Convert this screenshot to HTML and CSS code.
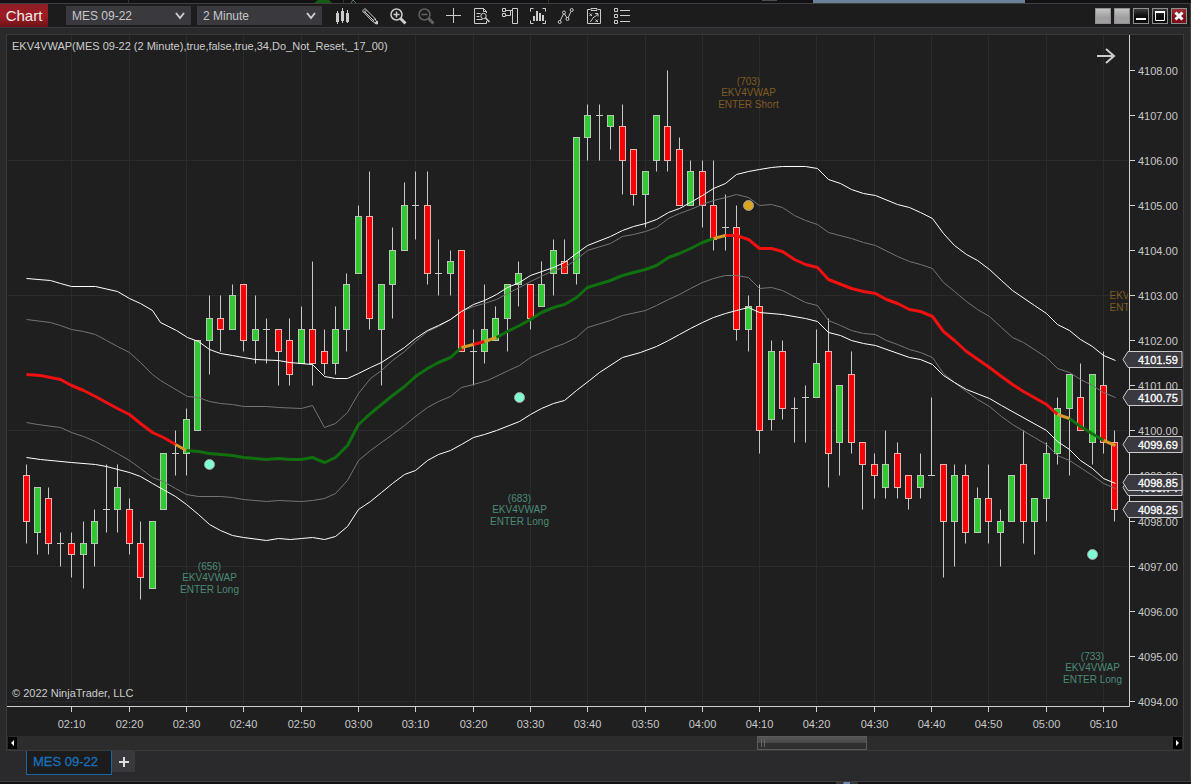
FILE: index.html
```html
<!DOCTYPE html>
<html lang="en">
<head>
    <meta charset="utf-8" />
    <title>Chart - MES 09-22</title>
    <link rel="stylesheet" href="styles.css">
</head>
<body>
    <svg class="strip strip-top" viewBox="0 0 1191 3" preserveAspectRatio="none" aria-hidden="true">
        <path d="M813 0H1025V3H813Z" fill="#6b7f98" />
        <path d="M318 0H329L332 3H314Z" fill="#155a15" />
        <path d="M351 3L353 0L356 3" fill="none" stroke="#567a68" />
        <path d="M128.5 0V3M343.5 0V3M548.5 0V3" stroke="#333" />
        <path d="M762 0H777" stroke="#888" />
    </svg>

    <div class="window">
        <header class="toolbar">
            <h1 class="title">Chart</h1>
            <select class="picker" aria-label="Instrument">
                <option>MES 09-22</option>
            </select>
            <select class="picker" aria-label="Interval">
                <option>2 Minute</option>
            </select>
            <div class="tools">
                <button class="tool" aria-label="Chart style">
                    <svg viewBox="0 0 20 20"><path d="M4 7h3v9H4zM9 5h3v10H9zM14 7h3v9h-3z" fill="#ccc" stroke="none" /><path d="M5.5 5v13M10.5 2v15M15.5 4v13" /></svg>
                </button>
                <button class="tool" aria-label="Drawing tools">
                    <svg viewBox="0 0 20 20"><path d="M2.500 5L5 2.500L15 12.500L17.500 17.500L12.500 15.500zM4 6.500L6.500 4M4.500 5.500L13.500 14.500M12.500 15.500L15 12.500" /><path d="M15 17.500L17.500 15V18z" fill="#ccc" /></svg>
                </button>
                <button class="tool" aria-label="Zoom in">
                    <svg viewBox="0 0 20 20"><circle cx="8.500" cy="8.500" r="5.500" stroke-width="1.500" /><path d="M5.500 8.500h6M8.500 5.500v6" stroke-width="1.500" /><path d="M12.500 12.500L17.500 17.500" stroke-width="3" /></svg>
                </button>
                <button class="tool" aria-label="Zoom out" disabled>
                    <svg viewBox="0 0 20 20"><circle cx="8.500" cy="8.500" r="5.500" stroke-width="1.500" /><path d="M5.500 8.500h6" stroke-width="1.500" /><path d="M12.500 12.500L17.500 17.500" stroke-width="3" /></svg>
                </button>
                <button class="tool" aria-label="Cross hair">
                    <svg viewBox="0 0 20 20"><path d="M2 9.500h15M9.500 2v15" /></svg>
                </button>
                <button class="tool" aria-label="Data box">
                    <svg viewBox="0 0 20 20"><path d="M14.500 7V5.500L11.500 2.500H2.500V17.500H14.500V15M11.500 2.500V5.500H14.500M4.500 7.500h4M4.500 10.500h3M4.500 13.500h6" /><circle cx="11.500" cy="10" r="2.700" /><path d="M13.500 12L17.500 16" stroke-width="1.700" /></svg>
                </button>
                <button class="tool" aria-label="Chart trader">
                    <svg viewBox="0 0 20 20"><path d="M2.500 2.500h3v3h-3zM2.500 7.500h3v3h-3zM5.500 4.500H12M5.500 9.500H10.500V4.500M12.500 2.500h5v15h-5z" /></svg>
                </button>
                <button class="tool" aria-label="Indicators">
                    <svg viewBox="0 0 20 20"><path d="M2.500 5.500v-3h3M14.500 2.500h3v3M17.500 14.500v3h-3M5.500 17.500h-3v-3" /><path d="M6 15v-5M9 15V5M12 15V7M15 15V9" stroke-width="2" /></svg>
                </button>
                <button class="tool" aria-label="Strategies">
                    <svg viewBox="0 0 20 20"><path d="M4 15L7.500 8M8.500 8L11 12M12 12L15 5.500" /><circle cx="3.700" cy="16" r="1.500" /><circle cx="8" cy="6.500" r="1.500" /><circle cx="11.500" cy="13" r="1.500" /><circle cx="15.700" cy="4" r="1.500" /></svg>
                </button>
                <button class="tool" aria-label="Strategy performance">
                    <svg viewBox="0 0 20 20"><path d="M6 3.500H3.500v14h13v-14H14M7 2.500h6v2H7zM5.500 7.500l2.500 2.500M8 7.500L5.500 10M11.500 13.500L14 16M14 13.500L11.500 16M6 15.500c2 0 2-3.500 4-4.500s2.500-1 3.500-3M11 7.500h3v3" /></svg>
                </button>
                <button class="tool" aria-label="Properties">
                    <svg viewBox="0 0 20 20"><path d="M2.500 2.500h3v3h-3zM2.500 8.500h3v3h-3zM2.500 14.500h3v3h-3zM8 4.500h10M8 9.500h10M8 15.500h10" /></svg>
                </button>
            </div>
            <div class="window-buttons">
                <button class="link-button" aria-label="Instrument link"></button>
                <button class="link-button" aria-label="Interval link"></button>
                <button class="frame-button" aria-label="Minimize"><svg viewBox="0 0 14 14"><path d="M2 10h10" stroke-width="2" /></svg></button>
                <button class="frame-button" aria-label="Maximize"><svg viewBox="0 0 14 14"><path d="M2.500 3v8.500h9V3" /><path d="M2 3h10" stroke-width="2" /></svg></button>
                <button class="frame-button close" aria-label="Close"><svg viewBox="0 0 14 14"><path d="M3.500 3.500L10.500 10.500M10.500 3.500L3.500 10.500" stroke-width="3" /></svg></button>
            </div>
        </header>

        <main class="panel">
            <svg id="chart" class="chart" viewBox="7 35 1176 701" role="img" aria-label="MES 09-22 2 minute chart">
                <clipPath id="plot"><path d="M7 35H1128V706H7Z" /></clipPath>
                <g id="grid" class="grid"></g>
                <g id="notes" clip-path="url(#plot)"></g>
                <g id="candles"></g>
                <g id="lines" class="lines"></g>
                <g class="dots">
                    <circle class="long" cx="209.500" cy="464.500" r="5" />
                    <circle class="long" cx="519.500" cy="397.500" r="5" />
                    <circle class="short" cx="748.500" cy="205.500" r="5" />
                    <circle class="long" cx="1092.500" cy="554.500" r="5" />
                </g>
                <path class="axis" d="M1129.500 35V706.500H7" />
                <g id="axis" class="axis"></g>
                <g id="tags"></g>
                <text class="caption" x="12" y="50">EKV4VWAP(MES 09-22 (2 Minute),true,false,true,34,Do_Not_Reset,_17_00)</text>
                <text class="caption" x="12" y="697">© 2022 NinjaTrader, LLC</text>
                <path class="arrow" d="M1097 56H1114M1106 49L1114 56L1106 63" />
            </svg>
            <div class="scrollbar">
                <button class="scroll-arrow" aria-label="Scroll left"><svg viewBox="0 0 9 12"><path d="M6 3V9L3 6Z" /></svg></button>
                <div class="track"><div class="thumb"></div></div>
                <button class="scroll-arrow" aria-label="Scroll right"><svg viewBox="0 0 9 12"><path d="M3 3V9L6 6Z" /></svg></button>
            </div>
        </main>

        <nav class="tabs">
            <a class="tab" href="#mes">MES 09-22</a>
            <button class="add-tab" aria-label="Add tab"><svg viewBox="0 0 10 10"><path d="M0 5H10M5 0V10" /></svg></button>
        </nav>
    </div>
    <svg class="strip strip-bottom" viewBox="0 0 1191 2" preserveAspectRatio="none" aria-hidden="true">
        <path d="M836 0H858V2H836Z" fill="#33333a" />
        <path d="M844 0H850V2H843Z" fill="#7088b0" />
    </svg>
    <script src="chart.js"></script>
</body>
</html>
```
FILE: styles.css
```css
body {
    margin: 0;
    min-height: 100vh;
    display: flex;
    flex-direction: column;
    background: #131114;
    color: #c8c8c8;
    font: 12px/16px "Liberation Sans", Arial, sans-serif;
}

button {
    margin: 0;
    padding: 0;
    border: 0;
    background: none;
}

svg {
    display: block;
}

.strip {
    width: 100%;
    flex: none;
}

.strip-top {
    height: 3px;
}

.strip-bottom {
    height: 2px;
}

.window {
    flex: 1;
    background: #2a2a2c;
    border: 1px solid #3e3e40;
    border-left: 0;
}

.toolbar {
    display: flex;
    align-items: center;
    gap: 6px;
    height: 23px;
    background: #1c1c1c;
    border-bottom: 1px solid #3a3a3c;
}

.title {
    margin: 0 12px 0 0;
    width: 48px;
    background: linear-gradient(to bottom, #8c1d24, #a01c24 50%, #6f1319);
    color: #eee;
    font-size: 15px;
    font-weight: normal;
    line-height: 23px;
    text-align: center;
}

.picker {
    appearance: none;
    width: 125px;
    height: 19px;
    padding: 0 6px;
    border: 0;
    border-radius: 0;
    background: #39393e url("data:image/svg+xml,%3Csvg xmlns='http://www.w3.org/2000/svg' width='10' height='8'%3E%3Cpath d='M1 1L5 6L9 1' fill='none' stroke='%23ccc' stroke-width='2'/%3E%3C/svg%3E") no-repeat right 6px center;
    color: #c8c8c8;
    font: inherit;
}

.tools {
    display: flex;
}

.tool {
    display: flex;
    justify-content: center;
    width: 28px;
    padding-top: 1px;
}

    .tool svg {
        width: 20px;
        height: 20px;
        fill: none;
        stroke: #ccc;
    }

    .tool:disabled {
        opacity: 0.4;
    }

.window-buttons {
    display: flex;
    gap: 3px;
    margin-left: auto;
    padding: 1px 3px 0 0;
}

    .window-buttons button {
        width: 16px;
        height: 16px;
        border: 1px solid #909090;
        background: linear-gradient(to bottom, #3c3c3c, #0c0c0c 50%);
    }

    .window-buttons .link-button {
        background: linear-gradient(to bottom, #c4c4c4, #a09ea0 60%);
    }

    .window-buttons .close {
        background: linear-gradient(to bottom, #a03036, #7c1018 60%);
    }

    .window-buttons svg {
        width: 14px;
        height: 14px;
        fill: none;
        stroke: #fff;
    }

.panel {
    margin: 6px 6px 0;
    border: 1px solid #3a3a3d;
    background: #1f1f1f;
}

.chart {
    width: 100%;
    height: auto;
    font-size: 11px;
}

.grid {
    stroke: #2b2b2e;
}

.axis {
    fill: none;
    stroke: #d0d0d0;
}

    .axis text {
        fill: #c8c8c8;
        stroke: none;
    }

    .axis .time {
        text-anchor: middle;
    }

.caption {
    fill: #ccc;
}

.arrow {
    fill: none;
    stroke: #ccc;
    stroke-width: 2px;
}

.wick {
    stroke: #c8c8c8;
}

.up {
    fill: #32c832;
    stroke: #b4c8b4;
}

.down {
    fill: #fb0000;
    stroke: #e6b4b4;
}

.lines {
    fill: none;
    stroke-linejoin: round;
}

.outer {
    stroke: #fff;
    stroke-width: 1px;
}

.inner {
    stroke: #747474;
    stroke-width: 1px;
}

.vwap {
    stroke-width: 3px;
}

.falling {
    stroke: #f01010;
}

.rising {
    stroke: #107010;
}

.turning {
    stroke: #d49a28;
}

.dots {
    stroke: #a0a0a0;
}

    .dots .long {
        fill: #7fffd4;
    }

    .dots .short {
        fill: #daa520;
    }

.note {
    font-size: 10px;
    text-anchor: middle;
}

    .note.long {
        fill: #4c8a76;
    }

    .note.short {
        fill: #7d5c22;
    }

.tag path {
    fill: #39393f;
    stroke: #ccc;
}

.tag text {
    fill: #fff;
    stroke: #fff;
    stroke-width: 0.3px;
}

.scrollbar {
    display: flex;
    align-items: center;
    height: 14px;
    padding: 0 1px;
    background: #2c2c2c;
}

.scroll-arrow {
    width: 9px;
    height: 12px;
    background: #000;
}

    .scroll-arrow svg {
        width: 9px;
        height: 12px;
        fill: #fff;
    }

.track {
    flex: 1;
}

.thumb {
    box-sizing: border-box;
    width: 110px;
    height: 14px;
    margin-left: 64%;
    border: 1px solid #5c5c5c;
    background:
        linear-gradient(#666, #666) 3px 2px / 1px 8px no-repeat,
        linear-gradient(#666, #666) 6px 2px / 1px 8px no-repeat,
        linear-gradient(to bottom, #555, #484848 50%, #303030 50%);
}

.tabs {
    display: flex;
    padding: 0 26px 6px;
}

.tab {
    padding: 3px 13px 4px 6px;
    border: 1px solid #1866a8;
    border-top: 0;
    background: #1c1c1c;
    color: #1b6fb8;
    font-size: 13px;
    -webkit-text-stroke: 0.3px #1b6fb8;
    text-decoration: none;
}

.add-tab {
    display: flex;
    align-items: center;
    justify-content: center;
    width: 23px;
    height: 21px;
    background: #39393d;
}

    .add-tab svg {
        width: 10px;
        height: 10px;
        stroke: #ddd;
        stroke-width: 2px;
    }
```
FILE: chart.js
```javascript
var SVG = "http://www.w3.org/2000/svg";

// open, high, low, close, in quarter-point ticks below 4108.00
var bars = [
    [36,35,42,40],[41,37,43,37],[38,37,43,42],[42,41,44,42],[42,41,45,43],[43,40,46,42],
    [42,39,44,40],[39,35,41,39],[39,35,41,37],[39,38,43,42],[42,40,47,45],[46,40,46,40],
    [39,34,39,34],[34,32,36,34],[34,30,36,31],[32,24,32,24],[24,20,27,22],[22,20,25,23],
    [23,19,23,20],[19,19,25,24],[24,20,26,23],[23,22,26,23],[23,23,28,25],[24,22,28,27],
    [26,21,26,23],[23,17,28,26],[25,23,27,26],[26,21,27,23],[23,18,25,19],[18,12,18,13],
    [13,9,23,22],[23,19,28,19],[19,14,22,16],[16,10,16,12],[12,9,15,12],[12,9,19,18],
    [18,15,20,18],[18,16,20,17],[16,16,25,25],[25,23,28,25],[25,19,26,23],[24,21,24,22],
    [22,19,25,19],[19,17,21,18],[19,19,23,22],[21,17,21,19],[18,15,20,16],[17,15,18,18],
    [18,6,19,6],[6,3,8,4],[4,3,8,4],[5,4,7,4],[5,3,11,8],[7,7,12,11],
    [11,9,14,9],[8,4,9,4],[5,0,9,8],[7,6,12,12],[12,8,12,9],[9,8,14,12],
    [12,8,16,15],[14,11,16,14],[14,12,24,23],[23,20,25,21],[21,19,34,32],[31,24,32,25],
    [25,24,31,30],[30,29,33,30],[29,28,33,29],[29,23,29,26],[25,22,37,34],[33,28,36,28],
    [27,25,34,33],[33,33,39,35],[35,34,38,36],[37,32,38,35],[34,33,38,37],[36,36,39,38],
    [37,34,38,36],[36,29,36,36],[35,35,45,40],[40,35,44,36],[36,35,42,41],[41,37,41,38],
    [38,35,42,40],[41,39,44,40],[40,36,40,36],[35,32,42,40],[40,38,43,38],[38,33,40,34],
    [34,29,35,30],[30,27,36,27],[29,26,32,32],[33,27,35,27],[28,25,34,33],[33,32,40,39]
];

var bands = [
    ["inner", "26,319 50,322 60,325 71,329 83,331 95,334 106,340 117,346 129,352 140,362 152,374 160,380 187,396 198,397 209,401 220,403 232,404 243,406 266,406 278,407 301,408 312,405 324,427 335,423 347,412 358,393 370,378 381,370 392,360 404,351 415,341 427,331 438,326 450,319 461,311 473,306 484,303 496,299 507,293 519,287 530,281 553,270 564,267 576,259 587,250 610,243 622,236 633,234 645,231 656,227 668,218 679,213 690,209 702,204 713,200 725,197 736,194 748,197 759,205 771,204 782,207 794,215 805,220 817,224 828,232 851,238 863,242 875,245 897,256 909,261 920,264 932,268 943,282 954,291 966,301 977,309 989,316 1001,327 1012,337 1023,342 1046,357 1057,368 1069,372 1080,379 1092,385 1103,392 1115,397"],
    ["inner", "26,422 37,424 60,427 71,432 83,436 95,441 106,447 117,453 129,460 140,468 152,477 163,481 175,488 186,494 198,496 220,496 232,497 243,499 266,501 278,500 301,501 312,500 324,498 335,493 347,480 358,460 370,450 392,434 404,425 415,416 427,407 438,401 450,396 461,387 473,384 487,380 508,370 519,365 530,357 553,347 564,343 576,337 587,327 610,320 622,315 645,310 656,305 668,299 679,294 690,288 702,282 713,278 725,275 736,275 748,277 759,288 771,287 782,290 805,302 817,305 828,320 840,325 851,330 863,333 875,334 886,340 897,344 909,349 920,352 932,357 943,373 954,382 966,391 977,399 989,406 1001,416 1012,424 1034,437 1046,444 1057,455 1069,460 1092,475 1103,483 1115,488"],
    ["outer", "26,278 50,280 60,283 71,286 95,286 117,291 129,298 140,303 152,310 160,322 176,330 187,337 198,341 209,349 220,353 232,355 243,357 255,359 278,360 289,362 312,364 324,376 335,378 347,378 358,373 370,367 381,362 404,347 415,338 427,330 438,325 450,319 461,311 473,304 484,300 496,294 507,287 519,282 530,275 553,267 564,262 576,253 587,245 610,236 622,230 633,226 645,223 656,219 668,212 679,208 690,202 702,195 713,188 725,183 736,174 748,171 759,169 771,167 782,166 805,166 817,168 828,179 840,183 851,189 863,193 875,195 897,204 909,207 920,212 932,218 943,233 954,245 966,254 977,260 989,269 1001,280 1012,290 1034,305 1046,313 1057,324 1069,330 1080,339 1092,346 1103,355 1115,360"],
    ["outer", "26,457 40,459 71,462 95,464 106,466 129,472 140,476 152,483 175,496 186,504 198,514 209,524 220,530 232,535 243,537 266,540 278,538 290,539 301,538 312,537 324,539 335,536 347,526 358,509 370,501 381,492 392,483 404,474 415,470 427,460 438,454 450,450 461,444 473,437 484,434 496,430 519,421 530,414 541,408 553,403 564,400 576,390 589,380 599,372 622,357 640,352 656,346 668,340 679,334 690,328 702,322 713,317 725,313 736,310 748,307 759,312 782,314 805,318 817,321 828,332 840,335 851,340 863,343 875,345 909,357 920,359 932,364 943,375 954,382 966,389 989,398 1001,405 1046,430 1057,441 1069,449 1080,460 1092,468 1103,478 1115,483"],
    ["vwap falling", "26,374 40,375 50,377 60,379 71,385 83,390 95,396 106,402 117,408 129,414 140,423 152,432 163,437 175,444"],
    ["vwap turning", "175,444 186,450"],
    ["vwap rising", "186,450 198,451 209,453 232,455 243,457 266,459 278,458 290,459 301,459 312,457 324,462 335,457 347,445 358,424 370,413 381,404 392,395 404,386 415,376 427,368 438,362 450,357 461,347"],
    ["vwap turning", "461,347 473,344"],
    ["vwap falling", "473,344 484,341"],
    ["vwap turning", "484,341 496,337"],
    ["vwap rising", "496,337 507,331 519,325 530,319 541,312 553,307 564,304 576,297 587,287 610,280 622,275 633,272 645,269 656,265 668,257 679,253 690,248 702,242 713,238"],
    ["vwap turning", "713,238 725,235"],
    ["vwap falling", "725,235 736,235 748,239 759,248 771,248 782,251 794,259 805,264 817,267 828,279 851,288 863,291 875,293 886,299 897,303 909,309 920,311 932,316 943,331 954,340 966,351 989,367 1001,376 1012,384 1023,391 1046,404 1057,414"],
    ["vwap turning", "1057,414 1069,418"],
    ["vwap rising", "1069,418 1080,426 1103,440"],
    ["vwap turning", "1103,440 1115,445"]
];

var notes = [
    ["long", 209, 570, ["(656)", "EKV4VWAP", "ENTER Long"]],
    ["long", 519, 502, ["(683)", "EKV4VWAP", "ENTER Long"]],
    ["short", 748, 85, ["(703)", "EKV4VWAP", "ENTER Short"]],
    ["short", 1119, 288, ["", "EKV", "ENT"]],
    ["long", 1092, 660, ["(733)", "EKV4VWAP", "ENTER Long"]]
];

var tags = [4101.59, 4100.75, 4099.69, 4098.74, 4098.85, 4098.25];

function barX(i) {
    return 26.5 + Math.floor(i * 11.463);
}

function tickY(t) {
    return Math.floor(70.2 + t * 11.27) + 0.5;
}

function add(parent, name, attrs, text) {
    var el = document.createElementNS(SVG, name);
    for (var key in attrs) {
        el.setAttribute(key, attrs[key]);
    }
    if (text) {
        el.textContent = text;
    }
    document.getElementById(parent).appendChild(el);
    return el;
}

function drawAxes() {
    for (var t = 0; t <= 56; t += 4) {
        var y = tickY(t);
        if ((t - 8) % 12 === 0) {
            add("grid", "path", { d: "M8 " + y + "H1127" });
        }
        add("axis", "path", { d: "M1130 " + y + "h5" });
        add("axis", "text", { x: 1138, y: y + 4 }, (4108 - t / 4).toFixed(2));
    }

    for (var i = 4; i < bars.length; i += 5) {
        var x = barX(i);
        var minutes = 122 + i * 2;
        var label = "0" + Math.floor(minutes / 60) + ":" + ("0" + minutes % 60).slice(-2);
        add("grid", "path", { d: "M" + x + " 35V704" });
        add("axis", "path", { d: "M" + x + " 707v5" });
        add("axis", "text", { "class": "time", x: x, y: 728 }, label);
    }
}

function drawBars() {
    bars.forEach(function (bar, i) {
        var x = barX(i);
        var top = tickY(Math.min(bar[0], bar[3]));
        var bottom = tickY(Math.max(bar[0], bar[3]));
        add("candles", "path", { "class": "wick", d: "M" + x + " " + tickY(bar[1]) + "V" + tickY(bar[2]) });
        if (top === bottom) {
            add("candles", "path", { "class": "wick", d: "M" + (x - 3.5) + " " + top + "h7" });
        }
        else {
            add("candles", "rect", {
                "class": bar[3] < bar[0] ? "up" : "down",
                x: x - 3, y: top, width: 6, height: bottom - top
            });
        }
    });
}

function drawTags() {
    tags.forEach(function (price) {
        var y = tickY((4108 - price) * 4);
        var tag = add("tags", "g", { "class": "tag" });
        var path = document.createElementNS(SVG, "path");
        path.setAttribute("d", "M1123 " + y + "L1128 " + (y - 8) + "H1182V" + (y + 8) + "H1128Z");
        var text = document.createElementNS(SVG, "text");
        text.setAttribute("x", 1138);
        text.setAttribute("y", y + 4);
        text.textContent = price.toFixed(2);
        tag.appendChild(path);
        tag.appendChild(text);
    });
}

drawAxes();
drawBars();
drawTags();

bands.forEach(function (band) {
    add("lines", "polyline", { "class": band[0], points: band[1], transform: "translate(0.5 0.5)" });
});

notes.forEach(function (note) {
    var offsets = [0, 11, 23];
    note[3].forEach(function (line, i) {
        add("notes", "text", { "class": "note " + note[0], x: note[1] + 0.5, y: note[2] + offsets[i] }, line);
    });
});
```
